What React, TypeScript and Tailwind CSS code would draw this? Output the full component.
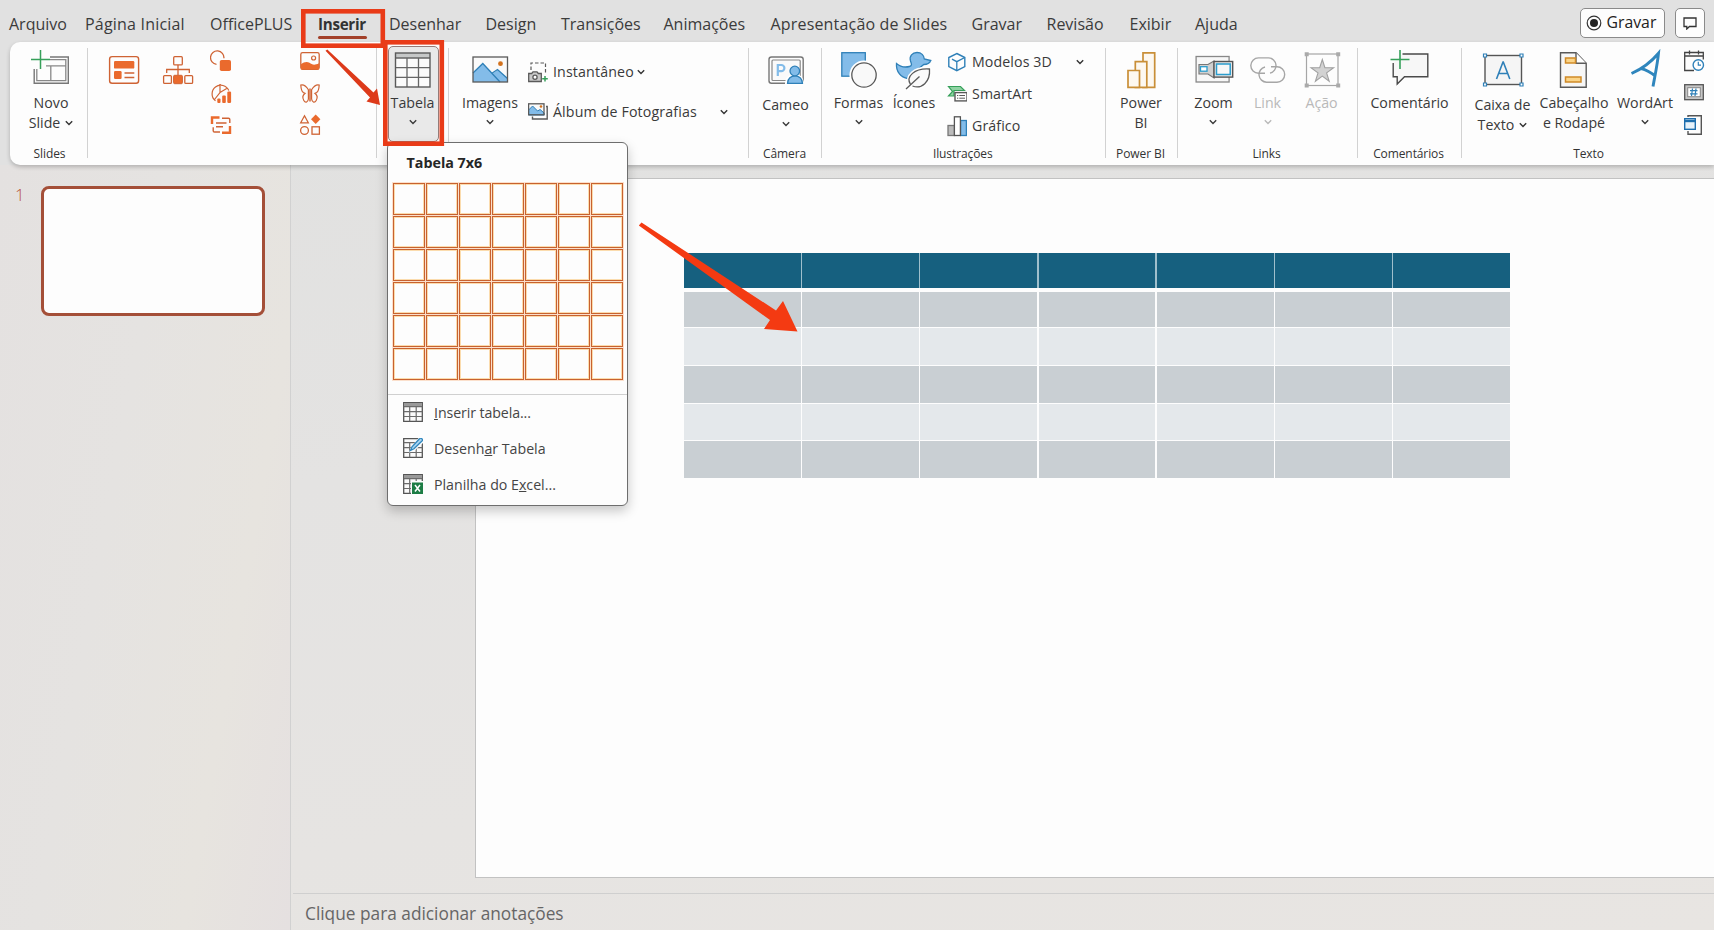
import React from "react";

type Kids = { children?: React.ReactNode };

function Ic({ v, children }: Kids & { v: [number, number, number, number] }) {
  return (
    <svg viewBox={v.join(" ")} width={v[2]} height={v[3]} fill="none" className="block shrink-0">
      {children}
    </svg>
  );
}

function Chevron({ className = "text-[#333]" }: { className?: string }) {
  return (
    <svg viewBox="0 0 8 6" width="8" height="6" fill="none" className={"block shrink-0 " + className}>
      <path d="M0.8 1.2 4 4.4 7.2 1.2" stroke="currentColor" strokeWidth="1.4" />
    </svg>
  );
}

function Group({ w, label, pad = "", last, children }: Kids & { w: string; label?: string; pad?: string; last?: boolean }) {
  return (
    <div className={"relative flex h-[123px] shrink-0 flex-col " + w + " " + pad}>
      <div className="flex h-[102px]">{children}</div>
      <div className="pr-[2px] text-center text-[12px] leading-[20px] tracking-[-0.1px] text-[#333]">{label}</div>
      {!last && <div className="absolute right-0 top-[6px] h-[110px] w-px bg-[#d2d2d2]" />}
    </div>
  );
}

function Big({ w, icon, lines, chev, low, tone = "text-[#3a3a3a]" }: {
  w: string; icon: React.ReactNode; lines: string[]; chev?: "below" | "inline"; low?: boolean; tone?: string;
}) {
  return (
    <div className={"flex shrink-0 flex-col items-center pt-[6px] " + w + " " + tone}>
      {icon}
      <div className={"flex flex-col items-center whitespace-nowrap text-[14.2px] leading-[20px] " + (low ? "pt-[3px]" : "pt-px")}>
        {lines.map((l, i) => (
          <div key={l} className="flex items-center gap-[5px]">
            {l}
            {chev === "inline" && i === lines.length - 1 && <Chevron />}
          </div>
        ))}
        {chev === "below" && <div className="pt-[6px]"><Chevron className={tone} /></div>}
      </div>
    </div>
  );
}

function Row({ icon, text, h, chev }: { icon: React.ReactNode; text: string; h: string; chev?: string }) {
  return (
    <div className={"flex items-center whitespace-nowrap text-[14.2px] text-[#3a3a3a] " + h}>
      {icon}
      <span className="-mt-px ml-[5px]">{text}</span>
      {chev && <span className={chev}><Chevron /></span>}
    </div>
  );
}

const TABS: [string, string][] = [
  ["Arquivo", "w-[76px]"], ["Página Inicial", "w-[125px] tracking-[0.2px]"], ["OfficePLUS", "w-[108px]"], ["Inserir", "w-[71px]"],
  ["Desenhar", "w-[96.5px]"], ["Design", "w-[75.5px]"], ["Transições", "w-[102.5px]"], ["Animações", "w-[107px]"],
  ["Apresentação de Slides", "w-[201px] tracking-[0.18px]"], ["Gravar", "w-[75px]"], ["Revisão", "w-[83px]"], ["Exibir", "w-[65.5px]"], ["Ajuda", "w-[60px]"],
];

function TabBar() {
  return (
    <div className="flex h-[42px] w-full shrink-0 items-start pl-[9px] text-[16px] text-[#3b3b3b]">
      {TABS.map(([t, w]) => (
        <div key={t} className={"shrink-0 whitespace-nowrap pt-[13px] leading-[22px] " + w}>
          {t === "Inserir" ? (
            <div className="w-[49px]">
              <div className="text-[15.2px] font-bold tracking-[-0.3px] text-[#333]">{t}</div>
              <div className="mt-px h-[3px] w-[49px] rounded-full bg-[#a3412a]" />
            </div>
          ) : t}
        </div>
      ))}
      <div className="ml-auto mr-[9px] mt-[8px] flex gap-[10px]">
        <div className="flex h-[30px] w-[85px] items-center rounded-[5px] border border-[#8a8a8a] bg-[#fdfdfd] pl-[5px] text-[#222]">
          <svg width="16" height="16" viewBox="0 0 16 16" fill="none">
            <circle cx="8" cy="8" r="6.8" stroke="#333" strokeWidth="1.2" />
            <circle cx="8" cy="8" r="4" fill="#222" />
          </svg>
          <span className="ml-[4.5px] text-[15.8px]">Gravar</span>
        </div>
        <div className="flex h-[30px] w-[30px] items-center justify-center rounded-[5px] border border-[#8a8a8a] bg-[#fdfdfd]">
          <svg width="14" height="13" viewBox="0 0 14 13" fill="none">
            <path d="M1 1h12v8.5H6.5L3.8 12V9.5H1z" stroke="#333" strokeWidth="1.3" />
          </svg>
        </div>
      </div>
    </div>
  );
}

const OR = "#cf6334";
const OF = "#ea6a2d";

function OfficePlusIcons() {
  return (
    <>
      <div className="ml-[20px] mt-[13px]">
        <Ic v={[108, 55, 32, 30]}>
          <rect x="109.6" y="56.6" width="29" height="26.6" rx="2.5" stroke={OR} strokeWidth="1.4" />
          <rect x="114" y="61" width="20.3" height="7.6" rx="1.2" fill={OF} />
          <rect x="114" y="71" width="7.6" height="8" rx="1.2" fill={OF} />
          <path d="M124.5 73h9.8M124.5 77.5h9.8" stroke={OR} strokeWidth="1.4" />
        </Ic>
      </div>
      <div className="ml-[22px] mt-[13px]">
        <Ic v={[162, 55, 32, 30]}>
          <rect x="173.7" y="56.7" width="8.6" height="8.2" rx="1" stroke={OR} strokeWidth="1.3" />
          <path d="M178 65v4.500M166.700 73v-3.500h22.600V73M178 69.500V75" stroke={OR} strokeWidth="1.3" />
          <rect x="163.600" y="75.600" width="7.800" height="7.800" rx="1" stroke={OR} strokeWidth="1.300" />
          <rect x="173.600" y="75.300" width="8.800" height="8.400" rx="1" fill={OF} stroke={OR} />
          <rect x="184.800" y="75.600" width="7.800" height="7.800" rx="1" stroke={OR} strokeWidth="1.300" />
        </Ic>
      </div>
      <div className="ml-[16px] mt-[8px] flex flex-col gap-[10px]">
        <Ic v={[210, 50, 22, 22]}>
          <path d="M216.500 64.300A6.700 6.700 0 1 1 223.900 58.200" stroke={OR} strokeWidth="1.300" />
          <rect x="219.800" y="60" width="11.200" height="11" rx="1.800" fill={OF} />
        </Ic>
        <Ic v={[210, 82, 22, 22]}>
          <path d="M215.500 100.800A8.700 8.700 0 1 1 228.800 90.500M220 84v8.500l-5.500 7M220 92.500l7.500-4.500" stroke={OR} strokeWidth="1.200" />
          <rect x="217.300" y="98.500" width="3.200" height="4.500" rx="1" fill={OF} />
          <rect x="222.200" y="95.500" width="3.600" height="7.500" rx="1" fill={OF} />
          <rect x="227.300" y="91.500" width="3.800" height="11.500" rx="1.200" fill={OF} />
        </Ic>
        <Ic v={[210, 114, 22, 22]}>
          <path d="M212 124v-6.500h7.500" stroke={OF} strokeWidth="2.400" />
          <path d="M230 126v6.700h-8" stroke={OF} strokeWidth="2.400" />
          <path d="M222 118.300h6.500a1.300 1.300 0 0 1 1.300 1.300v3.500M220 132h-5.500a1.300 1.300 0 0 1-1.300-1.300v-3.500" stroke={OR} strokeWidth="1.400" />
          <path d="M216 122.900h10.500M216 126.800h7" stroke={OR} strokeWidth="1.500" />
        </Ic>
      </div>
      <div className="ml-[67px] mt-[8px] flex flex-col gap-[10px]">
        <Ic v={[299, 50, 22, 22]}>
          <rect x="300.800" y="52.600" width="18.400" height="16.800" rx="1.800" stroke={OR} strokeWidth="1.300" />
          <circle cx="313.600" cy="58" r="2" stroke={OR} strokeWidth="1.200" />
          <path d="M301 69.500v-5.300c3-2.400 6-3 8.500-1.400 2.500 1.700 4.500 3 9.500.500v6.200z" fill={OF} />
        </Ic>
        <Ic v={[299, 82, 22, 22]}>
          <path d="M308.400 89.800c-1.800-3-4.800-5.500-7.600-4.800.2 3.800.6 6.200 2.600 7.600l1.700.700c-2.600 2-2.600 5-1.300 7.200 1.800 3 4.200 1.400 4.600-1.500zM311.600 89.800c1.800-3 4.800-5.500 7.600-4.800-.2 3.800-.6 6.200-2.600 7.600l-1.700.700c2.600 2 2.600 5 1.300 7.200-1.800 3-4.200 1.400-4.600-1.500z" stroke={OR} strokeWidth="1.200" />
          <path d="M310 88.500v13" stroke={OR} strokeWidth="1.500" />
        </Ic>
        <Ic v={[299, 114, 22, 22]}>
          <path d="M304.500 115.800l3.800 7h-7.600z" stroke={OR} strokeWidth="1.300" />
          <path d="M315.700 114.600l4.700 4.700-4.700 4.600-4.700-4.600z" fill={OF} />
          <circle cx="304.500" cy="130.500" r="3.900" stroke={OR} strokeWidth="1.300" />
          <rect x="312" y="126.800" width="7.400" height="7.400" stroke={OR} strokeWidth="1.300" />
        </Ic>
      </div>
    </>
  );
}

function TableIcon() {
  return (
    <Ic v={[391.500, 48, 44, 44]}>
      <rect x="396" y="53" width="34.500" height="34" fill="#fbfbfb" />
      <rect x="396" y="53" width="34.500" height="5" fill="#c6c8c8" />
      <path d="M396 58h34.500M396 67.700h34.500M396 77.300h34.500M407.500 58v29M419 58v29" stroke="#666" strokeWidth="1.300" />
      <rect x="396" y="53" width="34.500" height="34" stroke="#5a5a5a" strokeWidth="1.400" />
    </Ic>
  );
}

function Ribbon() {
  const g = "#5a5a5a";
  const b = "#2f80b8";
  const lb = "#83bce9";
  return (
    <div className="relative z-10 ml-[10px] flex h-[123px] shrink-0 rounded-l-[10px] bg-[#fdfdfd] shadow-[0_2px_4px_rgba(0,0,0,0.22)]">
      <Group w="w-[78px]" label="Slides" pad="pl-[3px]">
        <Big w="w-[76px]" lines={["Novo", "Slide"]} chev="inline" icon={
          <Ic v={[29, 48, 44, 44]}>
            <path d="M50 57h18.300v26.300H34.200V69" stroke="#777" strokeWidth="1.400" />
            <path d="M50 59.700h15.800v21H36.800V69M46 65.800h20M50.800 66v14.500" stroke="#888" strokeWidth="1.300" />
            <path d="M40.500 50v19M31 59.500h19" stroke="#36a05a" strokeWidth="1.500" />
          </Ic>} />
      </Group>
      <Group w="w-[289px]"><OfficePlusIcons /></Group>
      <Group w="w-[72px]">
        <div className="ml-[10.500px] mt-[4px] h-[96px] w-[51px] rounded-[5px] border border-[#957b78] bg-[#e9e9e9]">
          <div className="-ml-px -mt-[5px] flex justify-center">
            <Big w="w-[50px]" lines={["Tabela"]} chev="below" icon={<TableIcon />} />
          </div>
        </div>
      </Group>
      <Group w="w-[300px]" pad="pl-[3px]">
        <Big w="w-[76px]" lines={["Imagens"]} chev="below" icon={
          <Ic v={[468, 48, 44, 44]}>
            <rect x="473" y="57" width="34.500" height="25" fill="#fafafa" />
            <path d="M473 73l9.800-9.500 10 10 5-3.800 9.700 8.300v4H473z" fill={lb} />
            <path d="M473 73l9.800-9.500L500 82M491.500 73.500l6-4 10 9" stroke={b} strokeWidth="1.300" />
            <circle cx="500.500" cy="63.700" r="2.400" fill="#d2711c" />
            <rect x="473" y="57" width="34.500" height="25" stroke={g} strokeWidth="1.300" />
          </Ic>} />
        <div className="flex flex-col pt-[10px] tracking-[0.15px]">
          <Row h="h-[40px]" text="Instantâneo" chev="ml-[3px] -mt-px tracking-normal" icon={
            <Ic v={[528, 61, 20, 21]}>
              <path d="M531 69v-7h14.500v11" stroke={g} strokeWidth="1.200" strokeDasharray="3.500 2" />
              <path d="M528.700 72.500h3l1.300-1.700h4l1.300 1.700h3v8h-12.600z" fill="#c9c9c9" stroke={g} strokeWidth="1.300" />
              <circle cx="535" cy="76.300" r="2.100" fill="#fff" stroke={g} strokeWidth="1.300" />
              <path d="M545 75v5.500M542.200 77.700h5.600" stroke="#36a05a" strokeWidth="1.500" />
            </Ic>} />
          <Row h="h-[40px]" text="Álbum de Fotografias" chev="ml-[23px]" icon={
            <Ic v={[528, 101, 20, 20]}>
              <path d="M546 105.500h1.200V118h-14.700v-2.500" stroke={g} strokeWidth="1.400" />
              <rect x="528.600" y="102.800" width="15.400" height="11" fill="#fafafa" />
              <path d="M528.600 109l4-4 5 5 2.500-1.500 4 3.500v2h-15.500z" fill={lb} stroke={b} />
              <circle cx="541" cy="105.500" r="1.300" fill="#d2711c" />
              <rect x="528.600" y="102.800" width="15.400" height="11" stroke={g} strokeWidth="1.300" />
            </Ic>} />
        </div>
      </Group>
      <Group w="w-[73px]" label="Câmera">
        <Big w="w-[73px]" low lines={["Cameo"]} chev="below" icon={
          <Ic v={[763.500, 48, 44, 44]}>
            <rect x="768.500" y="57" width="34.200" height="26.300" rx="2.500" stroke="#777" strokeWidth="1.400" />
            <rect x="771.500" y="60" width="28.200" height="20.500" rx="1" fill="#fafafa" stroke="#888" strokeWidth="1.200" />
            <path d="M777.300 76V65h3.500a3.100 3.100 0 0 1 0 6.200h-3.500" stroke={lb} strokeWidth="2.200" />
            <path d="M786 84c0-12 16-12 16 0z" fill={lb} stroke="#fff" strokeWidth="3" />
            <path d="M787 83.400c0-10 15-10 15 0z" fill={lb} stroke={b} strokeWidth="1.300" />
            <circle cx="794.300" cy="71" r="4.800" fill={lb} stroke={b} strokeWidth="1.300" />
          </Ic>} />
      </Group>
      <Group w="w-[283.500px]" label="Ilustrações">
        <div className="flex pl-[9px]">
          <Big w="w-[55px]" lines={["Formas"]} chev="below" icon={
            <Ic v={[837.500, 48, 44, 44]}>
              <rect x="842.300" y="52.700" width="23.500" height="23.500" fill={lb} stroke={b} strokeWidth="1.300" />
              <circle cx="864.500" cy="75" r="12.600" fill="#f9f9f9" stroke="#fff" strokeWidth="4" />
              <circle cx="864.500" cy="75" r="12.200" fill="#f9f9f9" stroke={g} strokeWidth="1.300" />
            </Ic>} />
          <Big w="w-[56px]" lines={["Ícones"]} icon={
            <Ic v={[892.500, 48, 44, 44]}>
              <path d="M897 63.500c4 3.500 9 4 13 3 3-.7 2-3 1-5.500-1.500-5 2-8.500 6.500-8.500 4.500 0 7 3 7.300 6.500l6.500 1.500c-1 2.500-3.500 4-7 4l-5 4-11 10c-7-1-12-7-11.300-15z" fill={lb} stroke={b} strokeWidth="1.300" />
              <path d="M907 89l4-4.500c-5-8 4-17 19-15.500 1 13-8 20.500-17 17z" fill="#fff" stroke="#fff" strokeWidth="4" />
              <path d="M911 84.500c-5-8 4-16.500 19-15.500 1 13-8 20.500-17 17M906.500 89l13.500-12.500" fill="#fafafa" stroke={g} strokeWidth="1.300" />
            </Ic>} />
          <div className="ml-[5px] flex flex-col pt-[4px] tracking-[0.1px]">
            <Row h="h-[32px]" text="Modelos 3D" chev="ml-[24px]" icon={
              <Ic v={[947, 51, 20, 20]}>
                <path d="M956.800 52.500l8 4v9l-8 4.200-8-4.200v-9z" stroke={b} strokeWidth="1.400" />
                <path d="M952 58.200l4.800 2.500 8-4.200M956.800 60.700v9" stroke={b} strokeWidth="1.300" />
              </Ic>} />
            <Row h="h-[32px]" text="SmartArt" icon={
              <Ic v={[947, 83, 20, 20]}>
                <path d="M948.500 85.500h12l4 4H954v5.500h-5.500l4-4.500z" fill="#8fd3a3" stroke="#36a05a" strokeWidth="1.200" />
                <rect x="955" y="91.600" width="12" height="8.300" fill="#fff" stroke={g} strokeWidth="1.400" />
                <path d="M957 94.500h1.300m1 0h5.700M957 97.200h1.300m1 0h5.700" stroke={g} />
              </Ic>} />
            <Row h="h-[32px]" text="Gráfico" icon={
              <Ic v={[947, 115, 20, 21]}>
                <rect x="948" y="124.500" width="6.500" height="10" fill="#bbb" stroke="#777" strokeWidth="1.300" />
                <rect x="960.600" y="119.500" width="5.800" height="15" fill={lb} stroke={b} strokeWidth="1.300" />
                <rect x="954.400" y="115.800" width="6" height="18.700" fill="#fff" stroke="#555" strokeWidth="1.300" />
              </Ic>} />
          </div>
        </div>
      </Group>
      <Group w="w-[72px]" label="Power BI">
        <Big w="w-[71px]" lines={["Power", "BI"]} icon={
          <Ic v={[1119.500, 48, 44, 44]}>
            <g stroke="#c98f38" strokeWidth="1.700" fill="#fdf8f0">
              <path d="M1143.500 52.800h11.700v34.500h-11.700z" />
              <path d="M1135.800 61.700h11.500v25.600h-11.500z" />
              <path d="M1128.500 70.500h11.500v16.800h-11.500z" />
            </g>
          </Ic>} />
      </Group>
      <Group w="w-[180px]" label="Links">
        <div className="flex pl-[9px]">
          <Big w="w-[54px]" lines={["Zoom"]} chev="below" icon={
            <Ic v={[1192.500, 48, 44, 44]}>
              <rect x="1196.600" y="56.500" width="33" height="25.500" fill="#f7f7f7" stroke="#888" strokeWidth="1.300" />
              <path d="M1199.500 64.500h9l6-3.500v17l-6-4h-9z" fill="#d0d0d0" stroke="#777" strokeWidth="1.200" />
              <rect x="1201" y="66.700" width="6.500" height="4.500" fill="#fff" stroke="#2b9ccc" strokeWidth="1.300" />
              <rect x="1214.500" y="61.500" width="18.700" height="15.600" fill="#e6e6e6" stroke="#555" strokeWidth="1.400" />
              <rect x="1217" y="64" width="13.700" height="10.500" fill="#f8f8f8" stroke="#2b9ccc" strokeWidth="1.500" />
            </Ic>} />
          <Big w="w-[54px]" tone="text-[#b9b9b9]" lines={["Link"]} chev="below" icon={
            <Ic v={[1246, 48, 44, 44]}>
              <path d="M1265 73.300h-6.500a7.700 7.700 0 0 1 0-15.400h10a7.700 7.700 0 0 1 1.500 15.200" stroke="#a6a6a6" strokeWidth="1.400" />
              <path d="M1271 66.800h6a7.700 7.700 0 0 1 0 15.400h-10.500a7.700 7.700 0 0 1-1.500-15.200" stroke="#a6a6a6" strokeWidth="1.400" />
            </Ic>} />
          <Big w="w-[54px]" tone="text-[#b9b9b9]" lines={["Ação"]} icon={
            <Ic v={[1299.500, 48, 44, 44]}>
              <rect x="1306" y="54" width="31.500" height="31.500" stroke="#a6a6a6" strokeWidth="1.200" />
              <path d="M1304.200 52.200h4v4h-4zM1335.700 52.200h4v4h-4zM1304.200 83.500h4v4h-4zM1335.700 83.500h4v4h-4z" fill="#aaa" />
              <path d="M1321.800 59.500l2.600 8.200h8.700l-7 5.200 2.600 8.300-6.900-5.100-6.900 5.100 2.600-8.300-7-5.200h8.700z" fill="#d2d2d2" stroke="#a0a0a0" strokeWidth="1.100" />
            </Ic>} />
        </div>
      </Group>
      <Group w="w-[104px]" label="Comentários">
        <Big w="w-[104px]" lines={["Comentário"]} icon={
          <Ic v={[1387.500, 48, 44, 44]}>
            <path d="M1402 54h25.500v23H1404l-7.500 7.500V77h-4V63z" fill="#f7f7f7" />
            <path d="M1402 54h25.300v22.700H1404l-7.300 7.300v-7.300h-4V63" stroke="#4a4a4a" strokeWidth="1.400" />
            <path d="M1399.500 50v19M1390 59.500h19" stroke="#36a05a" strokeWidth="1.600" />
          </Ic>} />
      </Group>
      <Group w="w-[253px]" label="Texto" last pad="pl-[3px]">
        <div className="flex pl-[2px]">
          <Big w="w-[72px]" low lines={["Caixa de", "Texto"]} chev="inline" icon={
            <Ic v={[1481, 48, 44, 44]}>
              <rect x="1485" y="55.500" width="36.500" height="29" fill="#f5f5f5" stroke="#555" strokeWidth="1.400" />
              <path d="M1496.500 79l6.500-17h.3l6.500 17M1498.500 73.500h9.300" stroke={b} strokeWidth="1.600" />
              <path d="M1483.500 54h3v3h-3zM1520 54h3v3h-3zM1483.500 83h3v3h-3zM1520 83h3v3h-3z" fill="#fff" stroke={b} strokeWidth="1.200" />
            </Ic>} />
          <Big w="w-[71px]" lines={["Cabeçalho", "e Rodapé"]} icon={
            <Ic v={[1553, 48, 44, 44]}>
              <path d="M1561.500 52.700h15.500l10.200 10.500v24h-25.700z" fill="#f7f7f7" stroke={g} strokeWidth="1.400" />
              <path d="M1577 52.700v10.500h10.200" fill="#fff" stroke={g} strokeWidth="1.400" />
              <path d="M1566.500 58h10v5h-10zM1566.500 77h15.500v5h-15.500z" fill="#fbd487" stroke="#d08a28" strokeWidth="1.500" />
            </Ic>} />
          <Big w="w-[71px]" lines={["WordArt"]} chev="below" icon={
            <Ic v={[1624, 48, 44, 44]}>
              <path d="M1632.500 73.500c9-4 20-12 27-20.300-1 11-3.500 22-5.500 33.300M1641.500 68.300c6 1.500 10 3.500 15 8" stroke="#2f86bd" strokeWidth="2.900" />
            </Ic>} />
          <div className="flex flex-col gap-[10px] pl-[2px] pt-[8px]">
            <Ic v={[1683, 50, 22, 22]}>
              <path d="M1694 70.500h-9.300v-18h18.600v7M1684.700 56h18.600M1689.500 50.500v4M1698.500 50.500v4" stroke="#444" strokeWidth="1.300" />
              <circle cx="1698.300" cy="65" r="5.200" fill="#fff" stroke={b} strokeWidth="1.400" />
              <path d="M1698.300 61.800v3.400h2.700" stroke={b} strokeWidth="1.200" />
            </Ic>
            <Ic v={[1683, 82, 22, 22]}>
              <rect x="1684.700" y="84.700" width="18.600" height="15" fill="#c6c6c6" stroke="#555" strokeWidth="1.300" />
              <rect x="1687.700" y="87.700" width="12.600" height="9" fill="#fff" stroke="#888" />
              <path d="M1692.500 88.500l-1 7.500M1696 88.500l-1 7.500M1690 90.700h7.500M1690 93.800h7.500" stroke={b} strokeWidth="1.200" />
            </Ic>
            <Ic v={[1683, 114, 22, 22]}>
              <path d="M1688 117v-1.300h13.300v18.600H1688V131" stroke="#555" strokeWidth="1.400" />
              <rect x="1684.700" y="118.700" width="10.600" height="10.600" fill="#e8f3fb" stroke="#1f6fae" strokeWidth="1.400" />
              <path d="M1684.700 121h10.600" stroke="#1f6fae" strokeWidth="2.400" />
            </Ic>
          </div>
        </div>
      </Group>
    </div>
  );
}

function MenuTable({ kind }: { kind: "plain" | "pen" | "excel" }) {
  return (
    <svg width="20" height="20" viewBox="0 0 20 20" fill="none" className="block shrink-0">
      <path d="M.7.700h18.600v18.600H.7z" fill="#fafafa" stroke="#555" strokeWidth="1.300" />
      {kind !== "pen" && <path d="M1 1h18v3H1z" fill="#999" />}
      <path d="M.7 4.700h18.600M.7 9.700h18.600M.7 14.500h18.600M6.700 4.700v14.600M13.200 4.700v14.600" stroke="#6b6b6b" strokeWidth="1.200" />
      {kind === "pen" && (
        <>
          <path d="M6 14.500 8 9 16-.5h4V5l-9 8z" fill="#fdfdfd" />
          <path d="M7.500 12.500 9 8.800 16.500.8a1.500 1.500 0 0 1 2.500 2.200L11 10.800z" fill="#a9d4f1" stroke="#2f86bd" strokeWidth="1.300" />
        </>
      )}
      {kind === "excel" && (
        <>
          <path d="M8 7h12v13H8z" fill="#fdfdfd" />
          <path d="M9 8.500h11V20H9z" fill="#1d7d45" />
          <path d="M12 11l5 6.500M17 11l-5 6.500" stroke="#fff" strokeWidth="1.500" />
        </>
      )}
    </svg>
  );
}

function TableMenu() {
  return (
    <div className="absolute left-[387px] top-[142px] z-20 h-[364px] w-[241px] rounded-[6px] border border-[#6e6e6e] bg-[#fdfdfd] shadow-[0_5px_12px_rgba(0,0,0,0.22)]">
      <div className="h-[40px] pl-[18.500px] pt-[9px] text-[14.300px] font-bold leading-[22px] text-[#262626]">Tabela 7x6</div>
      <div className="ml-[5px] grid w-[230px] grid-cols-[repeat(7,32px)] gap-x-px gap-y-px">
        {Array.from({ length: 42 }, (_, i) => (
          <div key={i} className="h-[32px] border border-[#c8622f] bg-[#fdfdfd] shadow-[inset_0_0_0_1px_#fbdcae,0_0_0_1px_#fbe0cc]" />
        ))}
      </div>
      <div className="mt-[14px] h-px w-full bg-[#d0d0d0]" />
      <div className="-mt-px flex flex-col text-[14.200px] text-[#454545]">
        <div className="flex h-[36px] items-center pl-[15px]"><MenuTable kind="plain" /><span className="ml-[11px] pt-[2px] tracking-[-0.100px]"><u>I</u>nserir tabela...</span></div>
        <div className="flex h-[36px] items-center pl-[15px]"><MenuTable kind="pen" /><span className="ml-[11px] pt-[2px]">Desenh<u>a</u>r Tabela</span></div>
        <div className="flex h-[36px] items-center pl-[15px]"><MenuTable kind="excel" /><span className="ml-[11px] pt-[2px]">Planilha do E<u>x</u>cel...</span></div>
      </div>
    </div>
  );
}

const ROWS = ["h-[35px] bg-[#c9cfd3]", "h-[37px] bg-[#e4e8eb]", "h-[36.500px] bg-[#c9cfd3]", "h-[36.500px] bg-[#e4e8eb]", "h-[36.500px] bg-[#c9cfd3]"];

function SlideTable() {
  return (
    <div className="flex w-[826px] flex-col gap-px">
      <div className="mb-[3px] grid grid-cols-7 bg-[#9fbfcc] gap-x-[1.500px]">
        {Array.from({ length: 7 }, (_, c) => <div key={c} className="h-[35px] bg-[#16607f]" />)}
      </div>
      {ROWS.map((r, i) => (
        <div key={i} className="grid grid-cols-7 gap-x-[1.500px]">
          {Array.from({ length: 7 }, (_, c) => <div key={c} className={r} />)}
        </div>
      ))}
    </div>
  );
}

export default function App() {
  return (
    <div className="relative flex h-[930px] w-full flex-col overflow-hidden bg-[#e1e1e1] font-['Open_Sans','Noto_Sans',sans-serif]">
      <TabBar />
      <Ribbon />
      <div className="flex min-h-0 flex-1 bg-[linear-gradient(170deg,#e1e1e0_0%,#e4e3e2_35%,#e6e4e2_70%,#e8e5e2_100%)]">
        <div className="flex w-[291px] shrink-0 items-start border-r border-[#d1d1d1] bg-[linear-gradient(100deg,#e4e1e0_0%,#e5e3e1_40%,#e7e4df_75%,#e5e0e0_100%)] pt-[21px]">
          <div className="w-[41px] pl-[15px] text-[17px] font-light leading-[18px] text-[#b9543a]">1</div>
          <div className="h-[130px] w-[224px] rounded-[8px] border-[3px] border-[#a44f38] bg-[#fdfdfd]" />
        </div>
        <div className="flex min-w-0 flex-1 flex-col">
          <div className="h-[728px] pl-[184px] pt-[13px]">
            <div className="h-[700px] border-y border-l border-[#c2c2c2] bg-[#fdfdfd] pl-[208px] pt-[74px]">
              <SlideTable />
            </div>
          </div>
          <div className="ml-[2px] flex-1 border-t border-[#cfcfcf] pl-[12px] pt-[8px] text-[17.300px] leading-[24px] text-[#666]">Clique para adicionar anotações</div>
        </div>
      </div>
      <TableMenu />
      <svg width="1714" height="930" viewBox="0 0 1714 930" fill="none" className="pointer-events-none absolute left-0 top-0 z-30">
        <rect x="303.300" y="11.300" width="79.500" height="34.400" stroke="#e93b18" strokeWidth="4.600" />
        <rect x="385.300" y="42.300" width="56.500" height="101.400" stroke="#e93b18" strokeWidth="4.600" />
        <path d="M325.500 50.800l1.800-1.300L373.500 92.500l3.500-4 3 16.500-13.500-3.500 3.500-4z" fill="#dd3a1a" />
        <path d="M638.800 225.500l2.700-3L776 310.500l7-9.500 14.500 30.500-33.500-2.500 6-9z" fill="#f43a12" />
      </svg>
    </div>
  );
}
